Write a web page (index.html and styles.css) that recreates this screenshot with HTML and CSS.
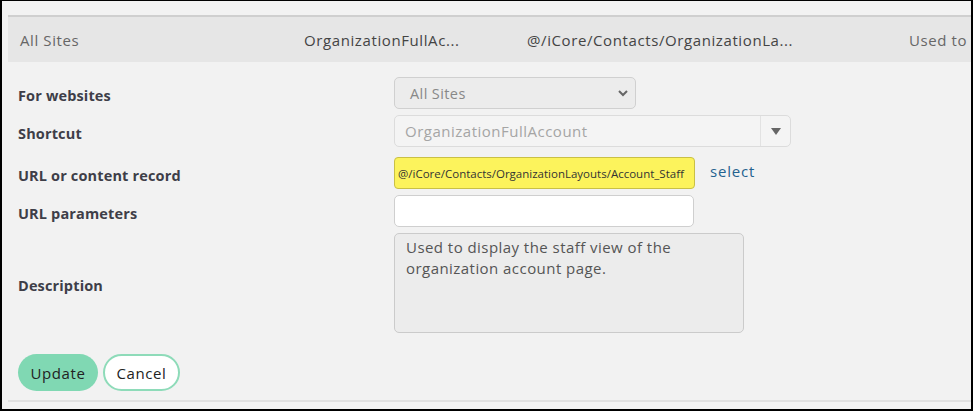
FILE: index.html
```html
<!DOCTYPE html>
<html>
<head>
<meta charset="utf-8">
<link rel="stylesheet" href="styles.css">
</head>
<body>
<div class="page">
  <div class="list-row">
    <span class="cell c1">All Sites</span>
    <span class="cell c2">OrganizationFullAc...</span>
    <span class="cell c3">@/iCore/Contacts/OrganizationLa...</span>
    <span class="cell c4">Used to display the staff view of the organization account page.</span>
  </div>
  <form class="editor">
    <div class="field r1">
      <label class="lbl">For websites</label>
      <div class="select">
        <span>All Sites</span>
        <svg class="chev" width="12" height="8" viewBox="0 0 12 8"><path d="M2 2 L6 6 L10 2" fill="none" stroke="#666" stroke-width="2"/></svg>
      </div>
    </div>
    <div class="field r2">
      <label class="lbl">Shortcut</label>
      <div class="combo">
        <span class="combo-text">OrganizationFullAccount</span>
        <span class="combo-btn"><svg width="10" height="7" viewBox="0 0 10 7"><path d="M0 0 H10 L5 7 Z" fill="#666"/></svg></span>
      </div>
    </div>
    <div class="field r3">
      <label class="lbl">URL or content record</label>
      <div class="url-wrap">
        <div class="url">@/iCore/Contacts/OrganizationLayouts/Account_Staff</div>
        <a class="select-link">select</a>
      </div>
    </div>
    <div class="field r4">
      <label class="lbl">URL parameters</label>
      <div class="text-input"></div>
    </div>
    <div class="field r5">
      <label class="lbl">Description</label>
      <div class="textarea">Used to display the staff view of the organization account page.</div>
    </div>
    <div class="buttons">
      <button type="button" class="btn primary">Update</button>
      <button type="button" class="btn secondary">Cancel</button>
    </div>
  </form>
  <div class="rule"></div>
</div>
</body>
</html>
```
FILE: styles.css
```css
* { box-sizing: border-box; }
html, body { margin: 0; padding: 0; }
body {
  width: 973px;
  height: 411px;
  background: #f2f2f2;
  border-style: solid;
  border-color: #000;
  border-width: 1px 2px 2px 2px;
  font-family: "Open Sans", "Liberation Sans", sans-serif;
  font-size: 15px;
  letter-spacing: 0.5px;
  overflow: hidden;
}
.page {
  padding: 14px 0 0 6px;
}
.list-row {
  display: flex;
  align-items: center;
  height: 47px;
  background: #e6e6e6;
  border-top: 2px solid #cfcfcf;
  font-size: 15px;
  letter-spacing: 0.6px;
  color: #555;
  white-space: nowrap;
  overflow: hidden;
}
.cell { display: block; overflow: hidden; }
.c1 { width: 296px; padding-left: 12px; color: #666; }
.c2 { width: 223px; color: #444; }
.c3 { width: 382px; color: #444; }
.c4 { color: #666; flex: 1; }

.editor {
  padding: 15px 0 0 10px;
}
.field {
  display: grid;
  grid-template-columns: 376px auto;
  align-items: center;
}
.lbl {
  font-weight: 700;
  font-size: 14.5px;
  letter-spacing: 0.15px;
  color: #3e3e48;
  padding-top: 5px;
}
.r2 { margin-top: 6px; }
.r3 { margin-top: 10px; }
.r4 { margin-top: 6px; }
.r5 { margin-top: 6px; }

.select {
  width: 242px;
  height: 32px;
  border: 1px solid #d0d0d0;
  border-radius: 5px;
  background: #ececec;
  display: flex;
  align-items: center;
  justify-content: space-between;
  padding: 0 6px 0 15px;
  font-size: 14.5px;
  letter-spacing: 0.4px;
  color: #888;
}
.combo {
  width: 397px;
  height: 32px;
  border: 1px solid #dcdcdc;
  border-radius: 5px;
  background: #f4f4f4;
  display: flex;
  align-items: center;
  color: #a5a5a5;
}
.combo-text { flex: 1; padding-left: 10px; }
.combo-btn {
  width: 30px;
  height: 100%;
  border-left: 1px solid #e2e2e2;
  display: flex;
  align-items: center;
  justify-content: center;
}
.url-wrap {
  display: flex;
  align-items: center;
}
.url {
  width: 301px;
  height: 32px;
  background: #fcf35c;
  border: 1px solid #c9c046;
  border-radius: 4px;
  display: flex;
  align-items: center;
  padding-left: 3px;
  font-size: 11.5px;
  letter-spacing: 0;
  color: #333;
  white-space: nowrap;
}
.select-link {
  margin-left: 15px;
  margin-top: -4px;
  color: #24628f;
  letter-spacing: 0.8px;
}
.text-input {
  width: 300px;
  height: 32px;
  background: #fff;
  border: 1px solid #cfcfcf;
  border-radius: 5px;
}
.textarea {
  width: 350px;
  height: 100px;
  background: #ececec;
  border: 1px solid #cbcbcb;
  border-radius: 5px;
  padding: 3px 20px 0 11px;
  line-height: 21px;
  letter-spacing: 0.45px;
  color: #555;
}
.buttons {
  display: flex;
  gap: 5px;
  margin-top: 21px;
}
.btn {
  height: 37px;
  border-radius: 19px;
  font-family: inherit;
  font-size: 15px;
  letter-spacing: 0.6px;
  color: #222;
  padding: 0;
}
.primary {
  width: 80px;
  background: #80d8b3;
  border: none;
}
.secondary {
  width: 77px;
  background: #fff;
  border: 2px solid #8edbb9;
}
.rule {
  margin-top: 9px;
  height: 2px;
  background: #e0e0e0;
}
```
